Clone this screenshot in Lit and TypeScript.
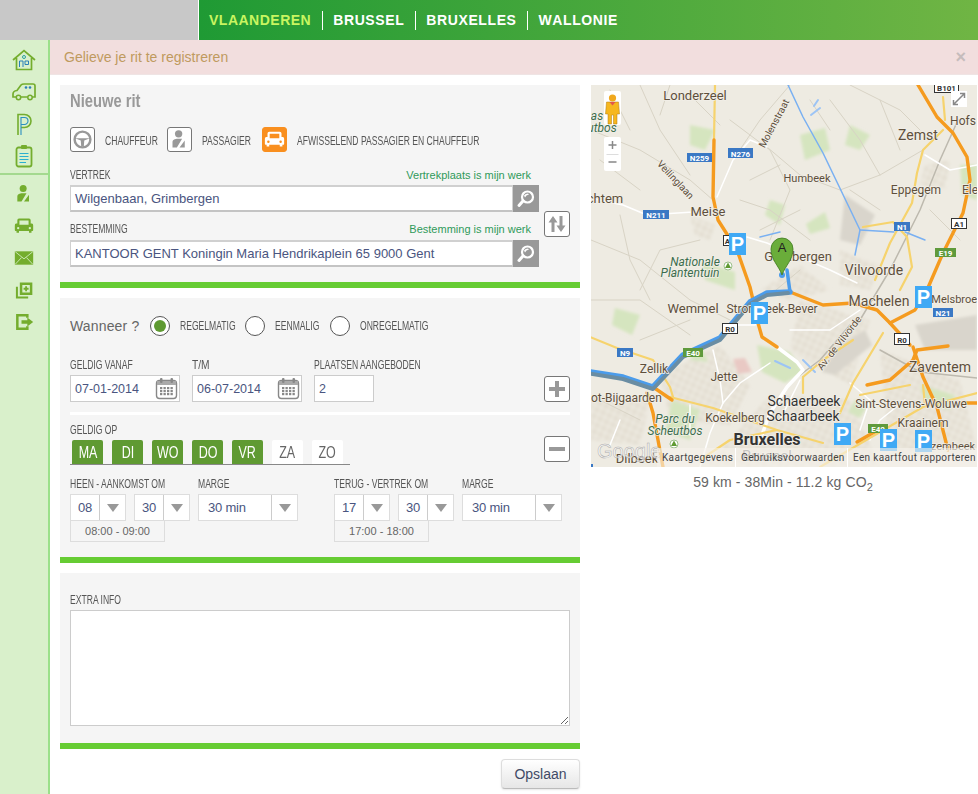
import { LitElement, html, css, svg } from "lit";
import { customElement } from "lit/decorators.js";

const line = (c: string, w: number, pts: string[]) =>
  pts.map((p) => svg`<polyline points=${p} fill="none" stroke=${c} stroke-width=${w} stroke-linejoin="round" stroke-linecap="round"></polyline>`);

type L = [string, number, number, number, string?];
const labels: L[] = [
  ["Londerzeel", 695, 100, 13], ["chtem", 605, 203, 13], ["Meise", 708, 216, 13], ["Humbeek", 807, 182, 11],
  ["Zemst", 918, 140, 14], ["Hofs", 963, 125, 12], ["Eppegem", 916, 194, 12], ["Ele", 970, 194, 12],
  ["Grimbergen", 798, 261, 13], ["Vilvoorde", 874, 275, 14], ["Wemmel", 693, 313, 13],
  ["Strombeek-Bever", 772, 313, 12], ["Machelen", 879, 306, 14], ["Melsbroek", 957, 303, 11],
  ["Zellik", 654, 373, 12], ["Jette", 724, 381, 12], ["Zaventem", 940, 372, 14], ["oot-Bijgaarden", 623, 402, 12],
  ["Sint-Stevens-Woluwe", 911, 408, 12], ["Koekelberg", 735, 422, 12], ["Kraainem", 923, 427, 12],
  ["zembeek", 953, 450, 11], ["Dilbeek", 637, 463, 13],
];
const greens: L[] = [
  ["Nationale", 695, 266, 12], ["Plantentuin", 690, 277, 12], ["Parc du", 675, 423, 12], ["Scheutbos", 675, 435, 12],
  ["as", 597, 120, 12], ["utbos", 602, 132, 12],
];
type S = [string, number, number, number, number, string];
const shields: S[] = [
  ["N259", 687, 153, 25, 9, "#3a78c4"], ["N276", 728, 148, 25, 10, "#3a78c4"], ["N211", 643, 210, 26, 9, "#3a78c4"],
  ["N1", 894, 222, 16, 9, "#3a78c4"], ["N21", 933, 308, 20, 9, "#3a78c4"], ["N9", 617, 348, 16, 9, "#3a78c4"],
  ["E19", 935, 248, 21, 9, "#5f9a3c"], ["E40", 683, 348, 20, 9, "#5f9a3c"], ["E40", 868, 424, 20, 9, "#5f9a3c"],
];
const whites: [string, number, number, number, number][] = [
  ["A1", 951, 218, 15, 10], ["R0", 722, 323, 15, 10], ["R0", 894, 333, 15, 11], ["A", 723, 235, 8, 10], ["B101", 934, 84, 24, 8],
];
const parks: [number, number][] = [[880, 429], [915, 430], [834, 423], [915, 286], [751, 302], [729, 233]];

const grid = svg`
  <defs>
    <pattern id="urban" width="7" height="7" patternUnits="userSpaceOnUse" patternTransform="rotate(25)">
      <rect width="7" height="7" fill="#e4dfd3"></rect>
      <path d="M0 3.500 H7 M3.500 0 V7" stroke="#f1eee6" stroke-width="1"></path>
    </pattern>
    <filter id="soft" x="-20%" y="-20%" width="140%" height="140%"><feGaussianBlur stdDeviation="1.800"></feGaussianBlur></filter>
  </defs>
  <rect x="591" y="85" width="386" height="382" fill="#eeebe2"></rect>
  <g filter="url(#soft)">
    <path d="M730 440 L770 395 L850 400 L880 467 L700 467 Z M660 375 L720 345 L750 385 L730 425 L670 420 Z M800 300 L870 320 L850 385 L790 350 Z M880 350 L960 380 L977 450 L890 455 Z M591 395 L650 400 L640 445 L591 440 Z M760 290 L800 265 L830 290 L790 300 Z M690 215 L715 225 L710 240 L695 235 Z M840 250 L880 265 L870 290 L840 285 Z M925 165 L950 160 L945 190 L920 185 Z" fill="url(#urban)"></path>
    <path d="M845 195 L875 215 L860 245 L840 240 Z M915 325 L977 315 L977 350 L925 350 Z M840 345 L865 330 L872 345 L835 375 L822 372 Z" fill="#d9d5cc"></path>
    <path d="M757 345 L790 352 L803 372 L785 383 L762 372 Z M800 135 L825 128 L830 150 L805 160 Z M806 224 L825 212 L830 228 L810 234 Z M702 262 L735 272 L735 290 L705 280 Z M700 345 L708 362 L690 360 Z M920 385 L955 395 L950 410 L925 402 Z M855 400 L870 402 L860 418 L848 412 Z M690 125 L715 130 L705 150 L690 145 Z M672 400 L700 410 L690 440 L665 432 Z M960 165 L977 165 L977 200 L962 195 Z M615 308 L640 315 L632 335 L612 325 Z M850 125 L870 135 L860 150 L845 145 Z M770 200 L785 205 L780 225 L765 215 Z" fill="#d5e5bf"></path>
    <path d="M733 359 L745 358 L752 372 L738 374 Z" fill="#e9c9c4"></path>
  </g>
  ${line("#d8d3c5", 1, [
    "591,130 640,150 690,180 713,200", "640,85 660,130 690,175", "730,120 770,150 790,190 770,240",
    "767,147 800,175 840,190 880,175 923,150", "790,85 760,120 733,160", "591,240 640,260 690,300 730,320",
    "591,300 640,300 690,335", "830,100 860,140 880,175", "850,85 900,110 920,130", "800,210 760,230",
    "740,200 770,210 810,240", "620,215 630,260 650,300", "880,100 900,150", "670,85 660,115",
    "600,160 640,190", "690,95 720,125", "610,90 630,130", "750,180 780,165", "640,340 690,320", "850,190 880,210",
    "770,295 800,270", "640,420 600,400", "930,210 960,240", "810,100 830,130", "700,240 660,250 640,290",
  ])}
  ${line("#bdb9ae", 1.5, ["958,120 940,160 920,210 890,270 860,320", "850,325 820,360 800,375", "880,350 920,372 977,378"])}
  ${line("#79b0f2", 1.5, ["788,85 803,117 823,153 860,230 855,255", "860,230 894,232", "905,232 925,240", "760,237 780,232"])}
  ${line("#9cc4f5", 2, ["811,115 820,108", "814,106 818,100", "803,360 815,372", "775,361 790,368"])}
  ${line("#fff", 1.5, [
    "767,147 750,140 733,160 717,197", "590,198 623,205 647,215 693,212", "747,237 767,243 830,270 857,283",
    "713,350 720,380 723,403 710,433 700,467", "723,403 740,383 770,363", "620,420 610,445", "780,420 800,380",
    "925,155 950,170 977,165", "905,400 880,420 870,440", "850,383 870,400 860,430", "738,325 755,325 770,310",
    "690,405 690,435", "790,330 830,330 860,310",
  ])}
  ${line("#fff", 3.500, ["777,347 797,362 803,370 787,387 770,413 760,440"])}
  ${line("#f6d36d", 2.200, [
    "943,130 923,150 917,173 912,203 890,243 875,280", "863,227 893,222 907,237 912,267 900,290",
    "943,97 945,120", "803,377 823,360 853,340", "803,377 803,393", "883,333 853,383 840,413",
    "820,467 923,407 977,393", "590,337 617,348 653,360 670,387 673,397", "670,397 713,408 777,430 823,443",
    "923,385 925,405", "715,85 714,140", "700,460 730,440 777,430", "860,395 910,385",
  ])}
  ${line("#f59b1f", 3.400, [
    "714,140 713,197 718,220 737,250 750,287 753,300 758,323 762,337 777,347",
    "918,85 937,117 953,133 967,157 970,180 963,213 943,253 927,290 915,310 890,323",
    "790,292 823,305 853,303 877,310 890,323 910,345", "647,393 653,413 663,467", "653,387 672,400",
    "867,385 890,380 913,360 917,350 948,346", "913,347 923,377 937,407 948,450", "857,442 883,427",
    "960,403 977,403",
  ])}
  ${line("#4b9ceb", 5.500, ["590,372 623,377 653,387 683,355 720,338 750,302 767,293 790,292"])}
  ${line("#4b9ceb", 3.500, ["790,292 787,270"])}
  ${line("#6a8da3", 4, ["590,373.500 623,379 653,389 683,357 720,340 750,304 767,295 788,293"])}
  <circle cx="782" cy="275" r="3" fill="#4b9ceb"></circle>
`;

const icons = {
  wheel: svg`<circle cx="12" cy="12" r="9" fill="none" stroke="currentColor" stroke-width="2.800"></circle><path d="M3.500 10.500 H20.500 L14 13 13.500 20 H10.500 L10 13 Z" fill="currentColor"></path>`,
  person: svg`<circle cx="11" cy="5.500" r="4.200" fill="currentColor"></circle><path d="M4 21 V15 C4 12 7 11 10 11 H15 L9 21 Z M12 21 L18 13 V21 Z" fill="currentColor"></path>`,
  bus: svg`<path d="M6 3 H18 Q20 3 20 5 V9 H21.500 Q23 9 23 11 V17 Q23 18 21 18 V20 H18 V18 H6 V20 H3 V18 Q1 18 1 17 V11 Q1 9 2.500 9 H4 V5 Q4 3 6 3 Z M6.500 5.500 V10.500 H17.500 V5.500 Z" fill="currentColor" fill-rule="evenodd"></path><circle cx="5" cy="14.500" r="1.400" fill="var(--hole)"></circle><circle cx="19" cy="14.500" r="1.400" fill="var(--hole)"></circle>`,
};

@customElement("app-root")
export class AppRoot extends LitElement {
  static styles = css`
    :host { display: block; height: 794px; overflow: hidden; font-family: "Liberation Sans", Arial, sans-serif; background: #fff; color: #555; }
    .top { display: flex; height: 40px; }
    .brand { width: 198px; background: #c8c8c8; border-right: 1px solid #fff; flex: none; }
    .nav { flex: 1; display: flex; align-items: center; padding-left: 10px; background: linear-gradient(90deg, #1f9a34, #70b544); }
    .nav a { font-weight: bold; font-size: 14px; letter-spacing: .6px; font-kerning: none; color: #fff; padding-right: 10.500px; margin-right: 10.500px; border-right: 1px solid #fff; line-height: 19px; }
    .nav a.on { color: #c8f560; letter-spacing: .5px; }
    .nav a:last-child { border: 0; }
    .body { display: flex; height: 754px; }
    .side { width: 48px; flex: none; background: #d9f0cb; border-right: 2px solid #9be08a; display: flex; flex-direction: column; padding-top: 4px; color: #74ad2e; }
    .si { height: 32px; display: flex; align-items: center; justify-content: center; }
    .si svg { width: 24px; height: 24px; display: block; }
    .si.sm svg { width: 20px; height: 20px; }
    .sdiv { height: 2px; background: #a4d98f; margin: 1px 0 3px; }
    .main { flex: 1; min-width: 0; }
    .alert { height: 34px; border-bottom: 1px solid #efe4e4; background: #f2dede; display: flex; align-items: center; justify-content: space-between; padding: 0 12px 0 14px; font-size: 14px; color: #bf9a5e; }
    .x { font-size: 18px; font-weight: bold; color: #c6bcbc; line-height: 1; }
    .cols { display: flex; gap: 11px; padding: 10px 0 0 10px; }
    .form { width: 520px; flex: none; display: flex; flex-direction: column; }
    .panel { background: #f5f5f5; border-bottom: 6px solid #66cc33; padding: 0 10px; margin-bottom: 10px; }
    .p1 { padding-top: 8px; padding-bottom: 15px; }
    .p2 { padding-top: 18px; padding-bottom: 15px; }
    .p3 { padding-top: 20px; padding-bottom: 17px; margin-bottom: 0; }
    h2 { margin: 0; font: bold 18px/17px "Liberation Sans", sans-serif; color: #999; display: block; width: max-content; transform: scaleX(.82); transform-origin: left center; white-space: nowrap; }
    .lab { display: block; width: max-content; font: 12px/14px "Liberation Sans", sans-serif; color: #555; text-transform: uppercase; white-space: nowrap; transform: scaleX(.715); transform-origin: left center; flex: none; }
    .lab.wide { transform: scaleX(.85); }
    .roles { display: flex; align-items: center; margin-top: 17px; height: 25px; }
    .rb { width: 25px; height: 25px; box-sizing: border-box; border: 1px solid #777; border-radius: 3px; background: #fff; color: #999; --hole: #fff; display: flex; align-items: center; justify-content: center; flex: none; }
    .rb svg { width: 21px; height: 21px; }
    .rb.act { background: #f98f1f; border-color: #f98f1f; color: #fff; --hole: #f98f1f; }
    .roles .lab { margin: 3px 10px 0; }
    .w52 { width: 52px; }
    .w50 { width: 50px; }
    .w182 { width: 182px; }
    .w55 { width: 55px; }
    .w45 { width: 45px; }
    .w68 { width: 68px; }
    .route { display: flex; gap: 5px; margin-top: 16px; }
    .fields { width: 469px; }
    .lr { display: flex; justify-content: space-between; padding-right: 8px; }
    .work { font-size: 11px; line-height: 14px; color: #2f9a5a; }
    .search { display: flex; height: 27px; margin-top: 3px; }
    .search + .lr { margin-top: 10px; }
    .search + .lr + .search { margin-top: 4px; }
    .tinput { box-sizing: border-box; flex: 1; border: 1px solid #ccc; border-width: 2px 1px; border-color: #d0d0d0 #d0d0d0 #c4c4c4; background: #fff; padding: 0 4px; font-size: 13px; line-height: 24px; color: #4a5580; white-space: nowrap; overflow: hidden; }
    .sb { width: 26px; background: #999; display: flex; align-items: center; justify-content: center; }
    .sb svg { width: 20px; height: 20px; }
    .tool { width: 26px; height: 26px; box-sizing: border-box; border: 1px solid #777; border-radius: 3px; background: #fff; flex: none; color: #999; display: flex; align-items: center; justify-content: center; }
    .tool svg { width: 20px; height: 20px; }
    .swap { align-self: flex-end; margin-bottom: 30px; }
    .when { display: flex; align-items: center; height: 20px; }
    .when .q { width: 70px; flex: none; font-size: 14px; letter-spacing: .15px; color: #666; margin-right: 10px; white-space: nowrap; }
    .radio { box-sizing: border-box; width: 20px; height: 20px; border-radius: 50%; border: 1px solid #555; background: #fff; display: flex; align-items: center; justify-content: center; flex: none; }
    .radio i { width: 12px; height: 12px; border-radius: 50%; background: #5f9a32; }
    .when .lab { margin: 0 10px; }
    .dates { display: flex; gap: 12px; margin-top: 22px; }
    .dates .tool { margin-left: auto; align-self: flex-end; }
    .box { box-sizing: border-box; height: 27px; margin-top: 3px; border: 1px solid #ccc; background: #fff; display: flex; align-items: center; justify-content: space-between; padding: 0 1px 0 4px; font-size: 12.500px; color: #4a5580; }
    .date { width: 110px; }
    .num { width: 60px; }
    .cal { width: 23px; height: 23px; }
    .rule { height: 3px; background: #fff; margin-top: 10px; }
    .oprow { display: flex; justify-content: space-between; margin-top: 8px; }
    .oprow .tool { margin-top: 13px; }
    .days { display: flex; gap: 9px; width: 278px; padding-left: 2px; margin-top: 3px; border-bottom: 1px solid #888; }
    .d { width: 31px; height: 24px; border-radius: 2px 2px 0 0; background: #fff; color: #666; font: 16px/26px "Liberation Sans", sans-serif; display: flex; justify-content: center; }
    .d span { display: block; transform: scaleX(.78); }
    .d.on { background: #5f9a32; color: #fff; }
    .times { display: flex; margin-top: 12px; gap: 36px; }
    .tg { display: flex; flex-direction: column; }
    .trow { display: grid; grid-template-columns: 56px 56px 100px; grid-template-rows: 14px 30px; column-gap: 8px; }
    .trow .lab { grid-row: 1; grid-column: 1; }
    .trow .lab.m { grid-column: 3; }
    .sel { grid-row: 2; box-sizing: border-box; margin-top: 3px; height: 27px; border: 1px solid #ddd; background: #fff; display: flex; font-size: 13px; letter-spacing: -.2px; color: #4a5580; white-space: nowrap; }
    .sel span { flex: 1; display: flex; align-items: center; justify-content: center; border-right: 1px solid #ccc; }
    .sel.wide span { justify-content: flex-start; padding-left: 9px; }
    .sel b { width: 25px; flex: none; display: flex; align-items: center; justify-content: center; }
    .sel b::after { content: ""; border: 6.500px solid transparent; border-top: 8px solid #999; border-bottom: 0; }
    .range { box-sizing: border-box; width: 95px; height: 21px; border: 1px solid #ddd; border-top: 0; font-size: 11px; line-height: 20px; text-align: center; color: #666; }
    textarea { display: block; box-sizing: border-box; width: 500px; height: 116px; margin: 3px 0 0; border: 1px solid #ccc; background: #fff; padding: 4px; resize: both; }
    .foot { display: flex; justify-content: flex-end; margin-top: 10px; }
    button { width: 79px; height: 30px; border: 1px solid #ddd; border-bottom-color: #bbb; border-radius: 4px; background: linear-gradient(#fff, #e6e6e6); box-shadow: 0 1px 2px rgba(0,0,0,.1); font: 14px "Liberation Sans", sans-serif; color: #3f4a66; padding: 0; }
    .mapcol { width: 386px; flex: none; }
    .map { display: block; width: 386px; height: 382px; }
    .cap { text-align: center; font-size: 14px; letter-spacing: .1px; color: #666; margin-top: 7px; line-height: 16px; padding-right: 2px; }
    .cap sub { font-size: 11px; line-height: 0; }
    .ml { font-family: Roboto, "Liberation Sans", sans-serif; fill: #5e4f3c; text-anchor: middle; stroke: #f2efe8; stroke-width: 1.500px; paint-order: stroke; }
    .dark { fill: #333; }
    .bold { fill: #333; font-weight: bold; }
    .faint { fill: #777; }
    .mg { font-family: Roboto, "Liberation Sans", sans-serif; font-style: italic; fill: #3b6d4d; text-anchor: middle; stroke: #f2efe8; stroke-width: 1.500px; paint-order: stroke; }
    .mb { font-family: Roboto, "Liberation Sans", sans-serif; font-weight: bold; fill: #fff; text-anchor: middle; font-size: 8px; }
    .mw { font-family: Roboto, "Liberation Sans", sans-serif; font-weight: bold; fill: #333; text-anchor: middle; font-size: 8px; }
    .mk { font-family: "Liberation Sans", sans-serif; font-weight: bold; fill: #fff; text-anchor: middle; font-size: 20px; }
    .mf { font-family: Roboto, "Liberation Sans", sans-serif; fill: #444; font-size: 10px; letter-spacing: .35px; }
    .logo { font-family: "Liberation Sans", sans-serif; font-size: 20px; fill: #fff; fill-opacity: .7; stroke: #aaa; stroke-width: .5px; }
  `;

  private sicon(body: unknown, small = false) {
    return html`<div class=${small ? "si sm" : "si"}><svg viewBox="0 0 24 24">${body}</svg></div>`;
  }

  private sel(v: string, wide = false) {
    return html`<div class=${wide ? "sel wide" : "sel"}><span>${v}</span><b></b></div>`;
  }

  private timeGroup(label: string, hour: string, min: string, range: string) {
    return html`<div class="tg">
      <div class="trow">
        <div class="lab">${label}</div><div class="lab m">Marge</div>
        ${this.sel(hour)}${this.sel(min)}${this.sel("30 min", true)}
      </div>
      <div class="range">${range}</div>
    </div>`;
  }

  private calendar() {
    return html`<svg class="cal" viewBox="0 0 23 23"><rect x="1.500" y="3.500" width="20" height="18" rx="3" fill="#fff" stroke="#888" stroke-width="1.400"></rect><rect x="2" y="4" width="19" height="4" fill="#aaa"></rect><rect x="5" y="1" width="2.500" height="5" rx="1" fill="#888"></rect><rect x="15.500" y="1" width="2.500" height="5" rx="1" fill="#888"></rect>
      ${[10, 13, 16].flatMap((y) => [5, 8.5, 12, 15.5].map((x) => svg`<rect x=${x} y=${y} width="2.300" height="2.200" fill="#888"></rect>`))}</svg>`;
  }

  private mag() {
    return html`<svg viewBox="0 0 20 20"><circle cx="11.500" cy="8" r="5.500" fill="#999" stroke="#fff" stroke-width="2.200"></circle><path d="M8 6.500 Q9.500 4.500 12 4.500 L13 5.500 Q10 6 9 8.500 Z" fill="#fff"></path><path d="M7 12 L3 16.500" stroke="#fff" stroke-width="3" stroke-linecap="round"></path></svg>`;
  }

  private map() {
    return html`<svg class="map" viewBox="591 85 386 382">
      ${grid}
      ${labels.map(([t, x, y, s]) => svg`<text class="ml" x=${x} y=${y} font-size=${s}>${t}</text>`)}
      ${greens.map(([t, x, y, s]) => svg`<text class="mg" x=${x} y=${y} font-size=${s}>${t}</text>`)}
      <text class="ml" transform="translate(777 125) rotate(-62)" font-size="10">Molenstraat</text>
      <text class="ml" transform="translate(673 182) rotate(47)" font-size="10">Veilinglaan</text>
      <text class="ml" transform="translate(842 345) rotate(-52)" font-size="10">Av. de Vilvorde</text>
      <text class="ml dark" x="804" y="406" font-size="14">Schaerbeek</text>
      <text class="ml dark" x="803" y="421" font-size="14">Schaarbeek</text>
      <text class="ml bold" x="767" y="445" font-size="16">Bruxelles</text>
      <text class="ml faint" x="767" y="461" font-size="15">Brussel</text>
      ${shields.map(([t, x, y, w, h, c]) => svg`<rect x=${x} y=${y} width=${w} height=${h} fill=${c}></rect><text class="mb" x=${x + w / 2} y=${y + h - 1.5}>${t}</text>`)}
      ${whites.map(([t, x, y, w, h]) => svg`<rect x=${x + 0.5} y=${y + 0.5} width=${w} height=${h} fill="#fff" stroke="#333" stroke-width="1"></rect><text class="mw" x=${x + w / 2 + 0.5} y=${y + h - 1}>${t}</text>`)}
      <circle cx="728" cy="266" r="4" fill="#fff" stroke="#9cc08a"></circle><path d="M728 262.500 L731 268 H725 Z" fill="#5f9a32"></path>
      <circle cx="674" cy="444" r="4" fill="#fff" stroke="#9cc08a"></circle><path d="M674 440.500 L677 446 H671 Z" fill="#5f9a32"></path>
      ${parks.map(([x, y]) => svg`<rect x=${x} y=${y} width="17" height="22" fill="#3fa9f5"></rect><text class="mk" x=${x + 8.5} y=${y + 18}>P</text>`)}
      <path d="M782 275 C779 266 771 260 771 249 A11 11 0 0 1 793 249 C793 260 785 266 782 275 Z" fill="#6aad3a" stroke="#3f7a1e" stroke-width=".8"></path>
      <text x="782" y="252" text-anchor="middle" font-size="13" fill="#222" font-family="Liberation Sans">A</text>
      <text class="logo" x="597" y="458">Google</text>
      <rect x="657" y="448" width="320" height="19" fill="#f5f2ec" fill-opacity=".62"></rect>
      <path d="M735.500 448 V467 M847.500 448 V467" stroke="#fff" stroke-width="1"></path>
      <text class="mf" x="662" y="461">Kaartgegevens</text>
      <text class="mf" x="741" y="461">Gebruiksvoorwaarden</text>
      <text class="mf" x="853" y="461">Een kaartfout rapporteren</text>
      <rect x="591" y="464" width="2" height="3" fill="#3a78c4"></rect>
      <g>
        <rect x="604" y="91" width="17" height="34" rx="2" fill="#fff"></rect>
        <circle cx="612.500" cy="98" r="3.600" fill="#f0a81e"></circle>
        <path d="M606.500 102 H618.500 L619.500 114 H617 V124 H613.500 V115 H611.500 V124 H608 V114 H605.500 Z" fill="#f6b71f" stroke="#b07a10" stroke-width=".5"></path>
        <path d="M609.500 102 H615.500 L612.500 105.500 Z" fill="#e2574c"></path>
        <rect x="604" y="137" width="17" height="34" rx="2" fill="#fff"></rect>
        <path d="M606.500 154.500 H618.500" stroke="#ddd"></path>
        <path d="M608.500 145 H616.500 M612.500 141 V149 M608.500 162 H616.500" stroke="#888" stroke-width="1.500"></path>
        <rect x="951" y="91" width="16" height="16" fill="#fff"></rect>
        <path d="M954 104 L964 94 M960 93.500 H964.500 V98 M953.500 100 V104.500 H958" fill="none" stroke="#888" stroke-width="1.500"></path>
      </g>
    </svg>`;
  }

  render() {
    const days: [string, boolean][] = [["MA", true], ["DI", true], ["WO", true], ["DO", true], ["VR", true], ["ZA", false], ["ZO", false]];
    return html`
      <div class="top">
        <div class="brand"></div>
        <nav class="nav"><a class="on">VLAANDEREN</a><a>BRUSSEL</a><a>BRUXELLES</a><a>WALLONIE</a></nav>
      </div>
      <div class="body">
        <aside class="side">
          ${this.sicon(svg`<path d="M1 12 L12 2.500 23 12 M4.500 10 V21.500 H19.500 V10" fill="none" stroke="currentColor" stroke-width="1.700"></path><circle cx="12" cy="9" r="1.500" fill="none" stroke="#2aa0a0" stroke-width="1"></circle><path d="M7.500 19 V13 H11 V19 M13 13 H16.500 V16.500 H13 Z" fill="none" stroke="#2b7fb8" stroke-width="1"></path>`)}
          ${this.sicon(svg`<path d="M1 14 Q1 11 5 10.500 L9 5 Q10 4 12 4 H21 Q23 4 23 6 V17 H1 Z" fill="none" stroke="currentColor" stroke-width="1.700"></path><circle cx="6.500" cy="17.500" r="2.200" fill="#d9f0cb" stroke="currentColor" stroke-width="1.500"></circle><circle cx="18" cy="17.500" r="2.200" fill="#d9f0cb" stroke="currentColor" stroke-width="1.500"></circle><circle cx="14" cy="7.500" r="1.300" fill="#2b7fb8"></circle><circle cx="18" cy="7.500" r="1.300" fill="#2b7fb8"></circle>`)}
          ${this.sicon(svg`<path d="M6 23 V2.500 H12.500 A6.500 6.500 0 0 1 12.500 15.500 H9" fill="none" stroke="currentColor" stroke-width="1.600"></path><path d="M9 23 V5.500 H12.500 A3.500 3.500 0 0 1 12.500 12.500 H9" fill="none" stroke="#2b8fc0" stroke-width="1.100"></path>`)}
          ${this.sicon(svg`<rect x="4.500" y="3.500" width="15" height="19" rx="2" fill="none" stroke="currentColor" stroke-width="1.800"></rect><rect x="9" y="1" width="6" height="4" rx="1" fill="currentColor"></rect><path d="M7.500 9.500 H16.500 M7.500 12.500 H16.500 M7.500 15.500 H16.500 M7.500 18.500 H14" stroke="#2ab0d0" stroke-width="1"></path>`)}
          <div class="sdiv"></div>
          ${this.sicon(icons.person, true)}
          <div class="si sm" style="--hole:#d9f0cb"><svg viewBox="0 0 24 24">${icons.bus}</svg></div>
          ${this.sicon(svg`<rect x="1" y="4" width="22" height="16" fill="currentColor"></rect><path d="M1.500 4.500 L12 13 22.500 4.500 M1.500 19.500 L9 11.500 M22.500 19.500 L15 11.500" fill="none" stroke="#d9f0cb" stroke-width="1"></path>`, true)}
          ${this.sicon(svg`<path d="M3.500 8 V21 H17" fill="none" stroke="currentColor" stroke-width="2.400"></path><rect x="7" y="3" width="15" height="15" fill="currentColor"></rect><rect x="10" y="6" width="9" height="9" fill="#d9f0cb"></rect><path d="M14.500 7.500 V13.500 M11.500 10.500 H17.500" stroke="currentColor" stroke-width="2.200"></path>`, true)}
          ${this.sicon(svg`<path d="M16 7 V4 H4 V20 H16 V17" fill="none" stroke="currentColor" stroke-width="3"></path><path d="M9 10 H16 V6.500 L23 12 16 17.500 V14 H9 Z" fill="currentColor"></path>`, true)}
        </aside>
        <div class="main">
          <div class="alert"><span>Gelieve je rit te registreren</span><span class="x">×</span></div>
          <div class="cols">
            <div class="form">
              <section class="panel p1">
                <h2>Nieuwe rit</h2>
                <div class="roles">
                  <div class="rb"><svg viewBox="0 0 24 24">${icons.wheel}</svg></div><span class="lab w52">Chauffeur</span>
                  <div class="rb"><svg viewBox="0 0 24 24">${icons.person}</svg></div><span class="lab w50">Passagier</span>
                  <div class="rb act"><svg viewBox="0 0 24 24">${icons.bus}</svg></div><span class="lab w182">Afwisselend passagier en chauffeur</span>
                </div>
                <div class="route">
                  <div class="fields">
                    <div class="lr"><span class="lab">Vertrek</span><span class="work">Vertrekplaats is mijn werk</span></div>
                    <div class="search"><div class="tinput">Wilgenbaan, Grimbergen</div><div class="sb">${this.mag()}</div></div>
                    <div class="lr"><span class="lab">Bestemming</span><span class="work">Bestemming is mijn werk</span></div>
                    <div class="search"><div class="tinput">KANTOOR GENT Koningin Maria Hendrikaplein 65 9000 Gent</div><div class="sb">${this.mag()}</div></div>
                  </div>
                  <div class="tool swap"><svg viewBox="0 0 20 20"><path d="M6 2 L10.500 8.500 H7.500 V18 H4.500 V8.500 H1.500 Z M14 18 L9.500 11.500 H12.500 V2 H15.500 V11.500 H18.500 Z" fill="currentColor"></path></svg></div>
                </div>
              </section>
              <section class="panel p2">
                <div class="when">
                  <span class="q">Wanneer ?</span>
                  <div class="radio"><i></i></div><span class="lab w55">Regelmatig</span>
                  <div class="radio"></div><span class="lab w45">Eenmalig</span>
                  <div class="radio"></div><span class="lab w68">Onregelmatig</span>
                </div>
                <div class="dates">
                  <div><div class="lab">Geldig vanaf</div><div class="box date">07-01-2014${this.calendar()}</div></div>
                  <div><div class="lab wide">T/M</div><div class="box date">06-07-2014${this.calendar()}</div></div>
                  <div><div class="lab">Plaatsen aangeboden</div><div class="box num">2</div></div>
                  <div class="tool"><svg viewBox="0 0 20 20"><path d="M8 2 H12 V8 H18 V12 H12 V18 H8 V12 H2 V8 H8 Z" fill="currentColor"></path></svg></div>
                </div>
                <div class="rule"></div>
                <div class="oprow">
                  <div>
                    <div class="lab">Geldig op</div>
                    <div class="days">${days.map(([d, on]) => html`<div class=${on ? "d on" : "d"}><span>${d}</span></div>`)}</div>
                  </div>
                  <div class="tool"><svg viewBox="0 0 20 20"><rect x="2" y="8" width="16" height="4" fill="currentColor"></rect></svg></div>
                </div>
                <div class="times">
                  ${this.timeGroup("Heen - aankomst om", "08", "30", "08:00 - 09:00")}
                  ${this.timeGroup("Terug - vertrek om", "17", "30", "17:00 - 18:00")}
                </div>
              </section>
              <section class="panel p3">
                <div class="lab">Extra info</div>
                <textarea></textarea>
              </section>
              <div class="foot"><button>Opslaan</button></div>
            </div>
            <div class="mapcol">
              ${this.map()}
              <div class="cap">59 km - 38Min - 11.2 kg CO<sub>2</sub></div>
            </div>
          </div>
        </div>
      </div>
    `;
  }
}
